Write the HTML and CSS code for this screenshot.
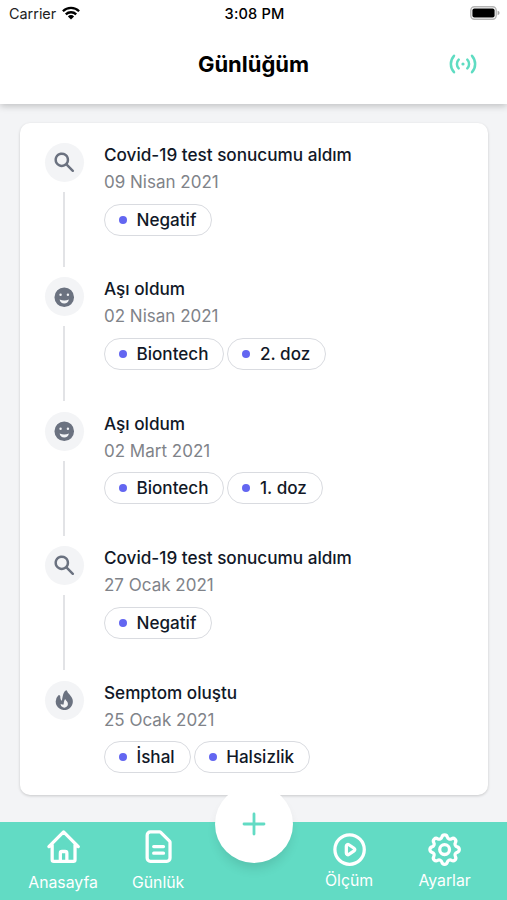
FILE: index.html
```html
<!DOCTYPE html>
<html lang="tr">
<head>
<meta charset="utf-8">
<title>Günlüğüm</title>
<link rel="stylesheet" href="styles.css">
</head>
<body>
<svg class="defs" aria-hidden="true">
  <symbol id="search" viewBox="0 0 20 20"><path fill-rule="evenodd" d="M8 4a4 4 0 100 8 4 4 0 000-8zM2 8a6 6 0 1110.89 3.476l4.817 4.817a1 1 0 01-1.414 1.414l-4.816-4.816A6 6 0 012 8z"/></symbol>
  <symbol id="smile" viewBox="0 0 20 20"><path fill-rule="evenodd" d="M10 18a8 8 0 100-16 8 8 0 000 16zM7 9a1 1 0 100-2 1 1 0 000 2zm7-1a1 1 0 11-2 0 1 1 0 012 0zM6.2 11.9Q10 13.3 13.8 11.9C13.4 14 12 15.2 10 15.2S6.600 14 6.200 11.9z"/></symbol>
  <symbol id="fire" viewBox="0 0 20 20"><path fill-rule="evenodd" d="M12.395 2.553a1 1 0 00-1.45-.385c-.345.23-.614.558-.822.88-.214.33-.403.713-.57 1.116-.334.804-.614 1.768-.84 2.734a31.365 31.365 0 00-.613 3.58 2.64 2.64 0 01-.945-1.067c-.328-.68-.398-1.534-.398-2.654A1 1 0 005.05 6.05 6.981 6.981 0 003 11a7 7 0 1011.95-4.95c-.592-.591-.98-.985-1.348-1.467-.363-.476-.724-1.063-1.207-2.03zM12.12 15.12A3 3 0 017 13s.879.5 2.5.5c0-1 .5-4 1.25-4.5.5 1 .786 1.293 1.371 1.879A2.99 2.99 0 0113 13a2.99 2.99 0 01-.879 2.121z"/></symbol>
</svg>
<header class="header">
  <div class="status">
    <div class="carrier">Carrier
      <svg class="wifi" viewBox="0 0 18 14"><g fill="none" stroke="#000" stroke-width="2.3"><path d="M.9 5.3a11.5 11.5 0 0116.2 0"/><path d="M3.8 8.4a7.4 7.4 0 0110.4 0"/></g><path d="M5.9 10.4a4.4 4.4 0 016.2 0L9 13.6z"/></svg>
    </div>
    <div class="clock">3:08 PM</div>
    <svg class="battery" viewBox="0 0 30 14"><rect x=".8" y=".8" width="25.4" height="12.4" rx="3.6" fill="#fff" stroke="#b5b5b5" stroke-width="1.4"/><rect x="2.4" y="2.4" width="22.2" height="9.2" rx="2"/><path d="M27.6 4.8q2 .6 2 2.2t-2 2.2z" fill="#a5a5a5"/></svg>
  </div>
  <div class="titlebar">
    <h1>Günlüğüm</h1>
    <svg class="signal" viewBox="0 0 28 20"><g fill="none" stroke="currentColor" stroke-width="2.5" stroke-linecap="round"><path d="M5 1.800a12.300 12.300 0 000 16.400M23 1.800a12.300 12.300 0 010 16.400M9.700 5.600a6.300 6.300 0 000 8.800M18.300 5.600a6.300 6.300 0 010 8.800"/></g><circle cx="14" cy="10" r="1.600" fill="currentColor"/></svg>
  </div>
</header>
<main class="card">
  <article class="entry">
    <div class="rail"><span class="avatar"><svg><use href="#search"/></svg></span><i></i></div>
    <div class="body"><h2>Covid-19 test sonucumu aldım</h2><time>09 Nisan 2021</time><div class="tags"><span>Negatif</span></div></div>
  </article>
  <article class="entry">
    <div class="rail"><span class="avatar"><svg><use href="#smile"/></svg></span><i></i></div>
    <div class="body"><h2>Aşı oldum</h2><time>02 Nisan 2021</time><div class="tags"><span>Biontech</span><span>2. doz</span></div></div>
  </article>
  <article class="entry">
    <div class="rail"><span class="avatar"><svg><use href="#smile"/></svg></span><i></i></div>
    <div class="body"><h2>Aşı oldum</h2><time>02 Mart 2021</time><div class="tags"><span>Biontech</span><span>1. doz</span></div></div>
  </article>
  <article class="entry">
    <div class="rail"><span class="avatar"><svg><use href="#search"/></svg></span><i></i></div>
    <div class="body"><h2>Covid-19 test sonucumu aldım</h2><time>27 Ocak 2021</time><div class="tags"><span>Negatif</span></div></div>
  </article>
  <article class="entry">
    <div class="rail"><span class="avatar"><svg><use href="#fire"/></svg></span></div>
    <div class="body"><h2>Semptom oluştu</h2><time>25 Ocak 2021</time><div class="tags"><span>İshal</span><span>Halsizlik</span></div></div>
  </article>
</main>
<nav class="nav">
  <a class="tab left"><svg viewBox="0 0 24 24"><path d="M3 12l2-2m0 0l7-7 7 7M5 10v10a1 1 0 001 1h3m10-11l2 2m-2-2v10a1 1 0 01-1 1h-3m-6 0a1 1 0 001-1v-4a1 1 0 011-1h2a1 1 0 011 1v4a1 1 0 001 1m-6 0h6"/></svg><span>Anasayfa</span></a>
  <a class="tab left"><svg viewBox="0 0 24 24"><path d="M9 12h6m-6 4h6m2 5H7a2 2 0 01-2-2V5a2 2 0 012-2h5.586a1 1 0 01.707.293l5.414 5.414a1 1 0 01.293.707V19a2 2 0 01-2 2z"/></svg><span>Günlük</span></a>
  <a class="tab"><svg viewBox="0 0 24 24"><path d="M14.752 11.168l-3.197-2.132A1 1 0 0010 9.87v4.263a1 1 0 001.555.832l3.197-2.132a1 1 0 000-1.664zM21 12a9 9 0 11-18 0 9 9 0 0118 0z"/></svg><span>Ölçüm</span></a>
  <a class="tab"><svg viewBox="0 0 24 24"><path d="M10.325 4.317c.426-1.756 2.924-1.756 3.35 0a1.724 1.724 0 002.573 1.066c1.543-.94 3.31.826 2.37 2.37a1.724 1.724 0 001.065 2.572c1.756.426 1.756 2.924 0 3.35a1.724 1.724 0 00-1.066 2.573c.94 1.543-.826 3.31-2.37 2.37a1.724 1.724 0 00-2.572 1.065c-.426 1.756-2.924 1.756-3.35 0a1.724 1.724 0 00-2.573-1.066c-1.543.94-3.31-.826-2.37-2.37a1.724 1.724 0 00-1.065-2.572c-1.756-.426-1.756-2.924 0-3.35a1.724 1.724 0 001.066-2.573c-.94-1.543.826-3.31 2.37-2.37.996.608 2.296.07 2.572-1.065zM15 12a3 3 0 11-6 0 3 3 0 016 0z"/></svg><span>Ayarlar</span></a>
  <button class="add" aria-label="Ekle"><svg viewBox="0 0 24 24"><path d="M12 2v20M2 12h20"/></svg></button>
</nav>
</body>
</html>
```
FILE: styles.css
```css
* { box-sizing: border-box; }
body {
  margin: 0;
  height: 900px;
  display: flex;
  flex-direction: column;
  overflow: hidden;
  background: #f3f4f6;
  font-family: Inter, "Liberation Sans", sans-serif;
  color: #111827;
}
svg { display: block; }
.defs { position: absolute; width: 0; height: 0; }
.header {
  height: 104px;
  flex: none;
  background: #fff;
  color: #000;
  box-shadow: 0 2px 7px rgba(0, 0, 0, .22);
}
.status {
  display: grid;
  grid-template-columns: 1fr auto 1fr;
  align-items: center;
  height: 26px;
  padding: 1px 7px 0 9px;
  font-size: 14.4px;
}
.carrier { display: flex; align-items: center; gap: 6px; color: #222; }
.wifi { width: 18px; height: 14px; margin-top: -2px; }
.clock { font-weight: 500; font-size: 14.6px; letter-spacing: .15px; }
.battery { width: 30px; height: 14px; justify-self: end; margin-top: -1px; }
.titlebar {
  display: grid;
  grid-template-columns: 1fr auto 1fr;
  align-items: center;
  height: 76px;
}
h1 { grid-column: 2; margin: 0; font-size: 22px; font-weight: 700; }
.signal { width: 28px; height: 20px; justify-self: end; margin-right: 30px; color: #5fdcc2; }
.card {
  flex: none;
  height: 672px;
  margin: 19px 19px 0 20px;
  padding: 20px 24px 0;
  border-radius: 10px;
  background: #fff;
  box-shadow: 0 1px 3px rgba(0, 0, 0, .18);
}
.entry { display: flex; gap: 20px; height: 134.4px; }
.rail { display: flex; flex-direction: column; align-items: center; width: 40px; gap: 10px; }
.avatar {
  display: flex;
  align-items: center;
  justify-content: center;
  width: 39px;
  height: 39px;
  border-radius: 50%;
  background: #f3f4f6;
}
.avatar svg { width: 24.5px; height: 24.5px; fill: #6b7280; }
.rail i { width: 2.4px; height: 75px; background: #e2e3e6; }
.body { display: flex; flex-direction: column; }
h2 { margin: 0; font-size: 17.15px; line-height: 24.6px; font-weight: 500; }
time { margin-top: 2.4px; font-size: 17px; line-height: 24px; color: #808389; }
.tags { display: flex; gap: 3px; margin-top: 9.6px; }
.tags span {
  display: flex;
  align-items: center;
  gap: 9.5px;
  height: 32px;
  padding: 0 15px 0 14px;
  border: 1.3px solid #d9dbe0;
  border-radius: 16px;
  font-size: 17.1px;
  line-height: 20px;
  font-weight: 500;
}
.tags span::before { content: ""; width: 8px; height: 8px; border-radius: 50%; background: #6366f1; }
.nav {
  position: relative;
  display: grid;
  grid-template-columns: 95px 95px 96px 95px 96px;
  justify-content: start;
  padding-left: 15.6px;
  height: 78px;
  margin-top: 27px;
  background: #62dbc4;
  color: #fff;
}
.tab { display: flex; flex-direction: column; align-items: center; padding-top: 8px; font-size: 15.8px; line-height: 20px; }
.tab svg { width: 39.2px; height: 39.2px; fill: none; stroke: #fff; stroke-width: 2; stroke-linecap: round; stroke-linejoin: round; }
.tab:nth-child(3) { grid-column: 4; }
.tab span { margin-top: 2px; }
.tab.left { padding-top: 5px; }
.tab.left span { margin-top: 7px; }
.add {
  position: absolute;
  left: 215px;
  top: -37px;
  width: 78px;
  height: 78px;
  border: 0;
  border-radius: 50%;
  background: #fff;
  display: flex;
  align-items: center;
  justify-content: center;
  box-shadow: 0 8px 12px -3px rgba(0, 0, 0, .12);
}
.add svg { width: 24px; height: 24px; fill: none; stroke: #62dbc4; stroke-width: 2.8; stroke-linecap: round; }
```
